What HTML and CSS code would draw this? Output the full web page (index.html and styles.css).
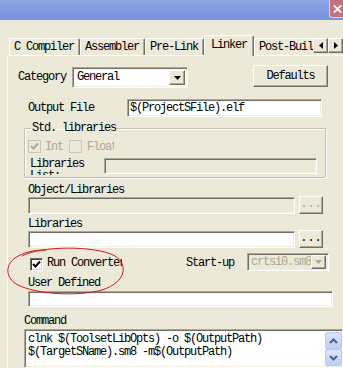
FILE: index.html
```html
<!DOCTYPE html>
<html>
  <head>
    <title>Linker</title>
    <link rel="stylesheet" href="styles.css">
  </head>
  <body>
    <div class="window">
      <div class="titlebar">
        <span class="close">
          <svg width="12" height="12" viewBox="0 0 12 12"><path d="M2 2 L10 10 M10 2 L2 10" stroke="#fff" stroke-width="2"/></svg>
        </span>
      </div>

      <div class="tabstrip">
        <div class="tabs">
          <div class="tab">C Compiler</div>
          <div class="tab">Assembler</div>
          <div class="tab">Pre-Link</div>
          <div class="tab selected">Linker</div>
          <div class="tab">Post-Build</div>
        </div>
        <div class="tab-arrows">
          <span class="btn arrow"><svg width="4" height="7" viewBox="0 0 4 7"><path d="M4 0 L0 3.5 L4 7 Z" fill="#000"/></svg></span>
          <span class="btn arrow"><svg width="4" height="7" viewBox="0 0 4 7"><path d="M0 0 L4 3.5 L0 7 Z" fill="#000"/></svg></span>
        </div>
      </div>

      <div class="panel">
        <div class="row category-row">
          <span class="label">Category</span>
          <div class="field select category-select">
            <span class="select-text">General</span>
            <span class="btn drop-btn"><svg width="7" height="4" viewBox="0 0 7 4"><path d="M0 0 L7 0 L3.5 4 Z" fill="#000"/></svg></span>
          </div>
          <div class="btn defaults">Defaults</div>
        </div>

        <div class="row output-row">
          <span class="label output-label">Output File</span>
          <div class="field output-input">$(ProjectSFile).elf</div>
        </div>

        <fieldset class="group">
          <legend>Std. libraries</legend>
          <div class="row checks">
            <span class="check disabled"><svg width="9" height="9" viewBox="0 0 9 9"><path d="M1 4 L3.5 6.5 L8 1.5" stroke="#aca899" stroke-width="2" fill="none"/></svg></span>
            <span class="label muted int-label">Int</span>
            <span class="check disabled"></span>
            <span class="label muted floa-label">Float</span>
          </div>
          <div class="row libs-row">
            <span class="label libs-label">Libraries List:</span>
            <div class="field disabled libs-input"></div>
          </div>
        </fieldset>

        <span class="label indent obj-label">Object/Libraries</span>
        <div class="row browse-row">
          <div class="field disabled browse-input"></div>
          <div class="btn browse-btn muted">...</div>
        </div>

        <span class="label indent lib-label">Libraries</span>
        <div class="row browse-row">
          <div class="field browse-input"></div>
          <div class="btn browse-btn">...</div>
        </div>

        <div class="row run-row">
          <span class="check"><svg width="9" height="9" viewBox="0 0 9 9"><path d="M1 4 L3.5 6.5 L8 1.5" stroke="#000" stroke-width="2" fill="none"/></svg></span>
          <span class="label run-label">Run Converter</span>
          <span class="label startup-label">Start-up</span>
          <div class="field disabled select startup-select">
            <span class="select-text muted">crtsi0.sm8</span>
            <span class="btn drop-btn"><svg width="7" height="4" viewBox="0 0 7 4"><path d="M0 0 L7 0 L3.5 4 Z" fill="#aca899"/></svg></span>
          </div>
        </div>

        <span class="label indent user-label">User Defined</span>
        <div class="field user-input"></div>

        <span class="label command-label">Command</span>
        <div class="field command">
          <div class="command-text">clnk $(ToolsetLibOpts) -o $(OutputPath)<br>$(TargetSName).sm8 -m$(OutputPath)</div>
          <div class="scrollbar">
            <span class="scroll-btn"><svg width="9" height="6" viewBox="0 0 9 6"><path d="M1 5 L4.5 1.5 L8 5" stroke="#4d6185" stroke-width="2" fill="none"/></svg></span>
            <span class="scroll-btn"><svg width="9" height="6" viewBox="0 0 9 6"><path d="M1 1 L4.5 4.5 L8 1" stroke="#4d6185" stroke-width="2" fill="none"/></svg></span>
          </div>
        </div>
      </div>

      <!-- red marker circle drawn over the dialog -->
      <svg class="mark" width="343" height="368" viewBox="0 0 343 368">
        <path d="M22 256 C40 246, 95 245, 115 256 C128 264, 127 282, 102 290 C76 297, 36 294, 18 285 C5 278, 5 265, 15 258 C24 252, 34 250, 46 250" stroke="#d01818" stroke-width="1" fill="none"/>
      </svg>
    </div>
  </body>
</html>
```

FILE: styles.css
```css
* {
  box-sizing: border-box;
}

body {
  margin: 0;
  background-color: #ece9d8;
  font-family: "Liberation Mono", monospace;
  font-size: 12px;
  letter-spacing: -1.2px;
  color: #000;
}

.window {
  position: relative;
  width: 343px;
  height: 368px;
  overflow: hidden;
  background-color: #ece9d8;
}

/* Barra de titulo */
.titlebar {
  height: 20px;
  display: flex;
  justify-content: flex-end;
  background: linear-gradient(#8ca6e6, #7c97df 70%, #7792dd);
}

.close {
  width: 14px;
  height: 18px;
  display: flex;
  align-items: center;
  justify-content: center;
  padding-left: 2px;
  background-color: #c6727e;
  border: 1px solid #ead0d4;
  border-right: none;
  border-top: none;
  border-radius: 0 0 0 3px;
}

/* Pestanas */
.tabstrip {
  display: flex;
  align-items: flex-end;
  height: 21px;
  margin-top: 15px;
  padding-left: 9px;
}

.tabs {
  display: flex;
  align-items: flex-end;
  width: 304px;
  height: 21px;
  overflow: hidden;
}

.tab {
  flex: none;
  height: 17px;
  margin-bottom: 1px;
  padding: 2px 5px 0 4px;
  line-height: 13px;
  white-space: nowrap;
  border: 1px solid;
  border-bottom: none;
  border-color: #fff #716f64 transparent #fff;
  border-radius: 2px 2px 0 0;
  box-shadow: inset -1px 0 #aca899;
}

.tab.selected {
  position: relative;
  z-index: 1;
  height: 21px;
  margin-bottom: 0;
  padding: 3px 6px 0 6px;
  background-color: #ece9d8;
}

.tab-arrows {
  display: flex;
  margin-bottom: 3px;
}

.btn {
  display: flex;
  align-items: center;
  justify-content: center;
  background-color: #ece9d8;
  border: 1px solid;
  border-color: #fff #716f64 #716f64 #fff;
  box-shadow: inset -1px -1px #aca899;
}

.arrow {
  width: 15px;
  height: 15px;
}

/* Panel principal */
.panel {
  margin-top: -1px;
  margin-left: 7px;
  height: 313px;
  padding-left: 16px;
  display: flex;
  flex-direction: column;
  align-items: flex-start;
  border-top: 1px solid #fff;
  border-left: 1px solid #fff;
}

.row {
  display: flex;
  align-items: center;
}

.label {
  display: block;
  height: 12px;
  line-height: 12px;
  white-space: nowrap;
}

.muted {
  color: #aca899;
}

.indent {
  margin-left: 4px;
}

.field {
  background-color: #fff;
  border: 1px solid;
  border-color: #aca899 #fff #fff #aca899;
  box-shadow: inset 1px 1px #716f64, inset -1px -1px #f1efe2;
}

.field.disabled {
  background-color: #ece9d8;
}

.select {
  display: flex;
  align-items: stretch;
  padding: 2px;
}

.select-text {
  flex: 1;
  padding-left: 2px;
  line-height: 15px;
}

.drop-btn {
  width: 16px;
}

.category-row {
  height: 24px;
  margin-top: 9px;
  margin-left: -6px;
}

.category-select {
  align-self: flex-end;
  width: 116px;
  height: 21px;
  margin-left: 6px;
}

.defaults {
  align-self: flex-start;
  width: 75px;
  height: 22px;
  margin-left: 65px;
}

.output-row {
  height: 18px;
  margin-top: 11px;
  margin-left: 4px;
}

.output-label {
  width: 99px;
}

.output-input {
  width: 195px;
  height: 18px;
  padding-left: 2px;
  line-height: 16px;
}

/* Grupo de librerias */
.group {
  width: 302px;
  height: 58px;
  margin: 5px 0 0 0;
  padding: 0 4px;
  min-width: 0;
  border: 1px solid #c4c1b2;
  border-radius: 2px;
  box-shadow: inset 1px 1px #fff, 1px 1px #fff;
}

.group legend {
  margin-left: 2px;
  padding: 0 1px;
  height: 12px;
  line-height: 12px;
}

.checks {
  height: 13px;
  margin-top: 6px;
  margin-left: -1px;
}

.check {
  width: 13px;
  height: 13px;
  display: flex;
  align-items: center;
  justify-content: center;
  background-color: #fff;
  border: 1px solid;
  border-color: #716f64 #fff #fff #716f64;
  box-shadow: inset 1px 1px #404040, inset -1px -1px #d4d0c8;
}

.check.disabled {
  background-color: #ece9d8;
  border-color: #cac8bb;
  box-shadow: none;
}

.int-label {
  margin-left: 4px;
  width: 24px;
}

.floa-label {
  margin-left: 5px;
  width: 27px;
  overflow: hidden;
}

.libs-row {
  height: 17px;
  margin-top: 5px;
  align-items: flex-start;
  overflow: hidden;
}

.libs-label {
  width: 74px;
  height: 24px;
  margin-left: 1px;
  white-space: normal;
  word-spacing: 20px;
}

.libs-input {
  width: 213px;
  height: 16px;
}

.obj-label {
  margin-top: 6px;
}

.browse-row {
  height: 18px;
  margin-top: 1px;
  margin-left: 4px;
  align-items: flex-start;
}

.browse-input {
  width: 267px;
  height: 17px;
}

.browse-btn {
  width: 24px;
  height: 18px;
  margin-left: 4px;
  margin-top: -1px;
  letter-spacing: 0;
  padding-bottom: 2px;
}

.lib-label {
  margin-top: 3px;
}

.run-row {
  height: 20px;
  margin-top: 5px;
}

.run-row .check {
  margin-left: 6px;
  margin-top: 3px;
}

.run-label {
  width: 75px;
  margin-left: 4px;
  overflow: hidden;
}

.startup-label {
  margin-left: 64px;
}

.startup-select {
  align-self: flex-start;
  width: 82px;
  height: 18px;
  margin-left: 13px;
  padding: 1px 2px 1px 1px;
}

.startup-select .select-text {
  line-height: 14px;
}

.user-label {
  margin-top: 4px;
}

.user-input {
  width: 305px;
  height: 17px;
  margin-top: 2px;
  margin-left: 4px;
}

.command-label {
  margin-top: 8px;
}

/* Caja de comandos con barra de desplazamiento */
.command {
  display: flex;
  width: 319px;
  height: 40px;
  margin-top: 2px;
  padding: 2px 0 0 2px;
}

.command-text {
  flex: 1;
  padding: 1px 0 0 1px;
  line-height: 13px;
  white-space: nowrap;
  overflow: hidden;
}

.scrollbar {
  width: 17px;
  display: flex;
  flex-direction: column;
}

.scroll-btn {
  height: 17px;
  display: flex;
  align-items: center;
  justify-content: center;
  background: linear-gradient(#dbe6fe, #bccffa);
  border: 1px solid #b7c9f0;
  border-radius: 2px;
}

.mark {
  position: absolute;
  top: 0;
  left: 0;
  pointer-events: none;
}
```
